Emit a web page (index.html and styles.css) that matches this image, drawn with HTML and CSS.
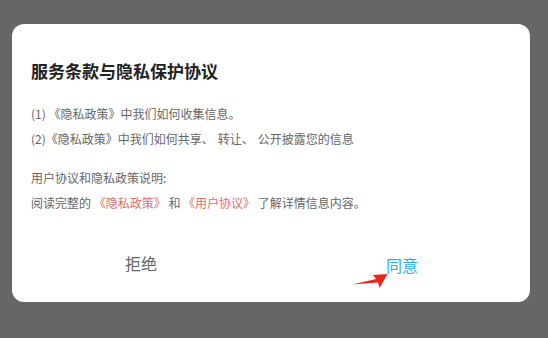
FILE: index.html
```html
<!DOCTYPE html>
<html lang="zh-CN">
<head>
<meta charset="utf-8">
<link rel="stylesheet" href="styles.css">
</head>
<body>
<div class="dialog">
  <h1 class="title">服务条款与隐私保护协议</h1>
  <div class="items">
    <p class="line">(1) 《隐私政策》中我们如何收集信息。</p>
    <p class="line">(2)《隐私政策》中我们如何共享<span class="pause">、</span>转让<span class="pause">、</span>公开披露您的信息</p>
  </div>
  <div class="items">
    <p class="line">用户协议和隐私政策说明:</p>
    <p class="line">阅读完整的 <span class="link">《隐私政策》</span> 和 <span class="link">《用户协议》</span> 了解详情信息内容。</p>
  </div>
  <div class="actions">
    <span class="btn reject">拒绝</span>
    <span class="btn agree">同意
      <svg class="arrow" width="40" height="20" viewBox="0 0 40 20">
        <path d="M2 14.5 L26 9 L23 5 L37.5 4 L29.5 18 L28 12.5 Z" fill="#e8281e"/>
      </svg>
    </span>
  </div>
</div>
</body>
</html>
```
FILE: styles.css
```css
html, body {
  margin: 0;
  padding: 0;
}
body {
  background: #666666;
  width: 548px;
  height: 338px;
  padding: 24px 0 0 12px;
  box-sizing: border-box;
  font-family: "Noto Sans CJK SC", "Noto Sans", sans-serif;
}
.dialog {
  width: 518px;
  height: 278px;
  background: #ffffff;
  border-radius: 12px;
  box-sizing: border-box;
  padding: 35px 19px 0 19px;
  display: flex;
  flex-direction: column;
}
.title {
  margin: 0;
  font-size: 17px;
  line-height: 24px;
  font-weight: 700;
  color: #222222;
}
.items {
  margin-top: 18px;
}
.items + .items {
  margin-top: 14px;
}
.line {
  margin: 0;
  font-size: 12px;
  line-height: 25px;
  color: #666666;
}
.pause {
  margin-right: 4px;
}
.link {
  color: #e06c6c;
}
.actions {
  display: flex;
  align-items: flex-start;
  margin-top: 38px;
}
.btn {
  font-size: 16px;
  line-height: 20px;
  position: relative;
}
.reject {
  color: #666666;
  margin-left: 94px;
}
.agree {
  color: #22b3ee;
  margin-left: 229px;
  margin-top: 2px;
}
.arrow {
  position: absolute;
  left: -36px;
  top: 15px;
}
```
